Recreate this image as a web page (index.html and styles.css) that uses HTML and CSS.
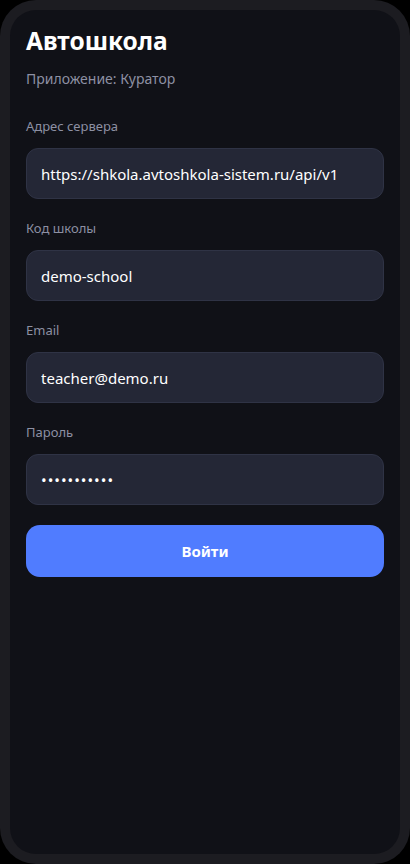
FILE: index.html
```html
<!DOCTYPE html>
<html lang="ru">
<head>
<meta charset="utf-8">
<title>Автошкола</title>
<link rel="stylesheet" href="styles.css">
</head>
<body>
<div class="phone">
  <div class="screen">
    <h1 class="title">Автошкола</h1>
    <p class="subtitle">Приложение: Куратор</p>
    <form class="form">
      <label class="field">
        <span class="label">Адрес сервера</span>
        <input class="input" type="text" value="https://shkola.avtoshkola-sistem.ru/api/v1">
      </label>
      <label class="field">
        <span class="label">Код школы</span>
        <input class="input" type="text" value="demo-school">
      </label>
      <label class="field">
        <span class="label">Email</span>
        <input class="input" type="text" value="teacher@demo.ru">
      </label>
      <label class="field">
        <span class="label">Пароль</span>
        <input class="input input-password" type="password" value="password123">
      </label>
      <button class="button" type="button">Войти</button>
    </form>
  </div>
</div>
</body>
</html>
```

FILE: styles.css
```css
* { box-sizing: border-box; }
html, body {
  margin: 0;
  padding: 0;
  background: #000;
}
body {
  width: 410px;
  height: 864px;
  font-family: "Noto Sans", "Open Sans", sans-serif;
}
.phone {
  width: 410px;
  height: 864px;
  background: #1c1c21;
  border-radius: 36px;
  padding: 10px;
}
.screen {
  height: 100%;
  background: #101117;
  border-radius: 26px;
  padding: 15px 16px 0 16px;
}
.title {
  margin: 0;
  font-size: 24.5px;
  font-weight: 700;
  color: #ffffff;
  line-height: 32px;
}
.subtitle {
  margin: 12px 0 0 0;
  font-size: 14px;
  line-height: 20px;
  color: #8d90a3;
}
.form {
  margin-top: 28px;
  display: flex;
  flex-direction: column;
  gap: 20px;
}
.field {
  display: flex;
  flex-direction: column;
}
.label {
  font-size: 13px;
  line-height: 18px;
  color: #8d90a3;
  margin-bottom: 13px;
}
.input {
  height: 51px;
  border-radius: 12px;
  background: #242736;
  border: 1px solid #2f3345;
  color: #ffffff;
  font-family: inherit;
  font-size: 15px;
  padding: 0 14px;
  outline: none;
}
.input-password {
  letter-spacing: 1px;
}
.button {
  height: 52px;
  border: none;
  border-radius: 14px;
  background: #507cff;
  color: #ffffff;
  font-family: inherit;
  font-size: 15px;
  font-weight: 700;
}
```
